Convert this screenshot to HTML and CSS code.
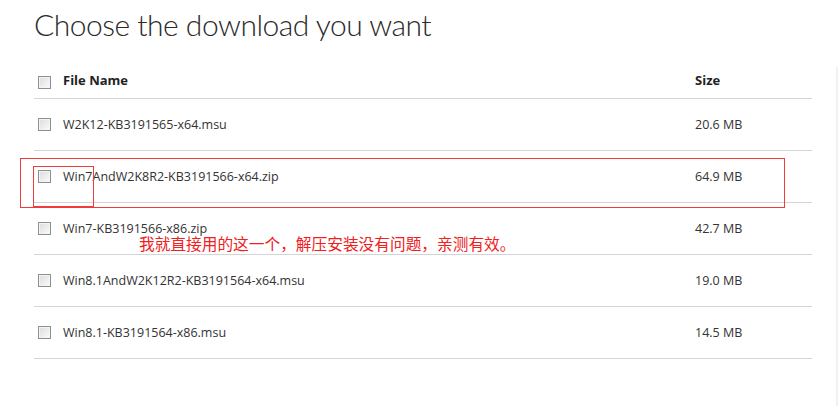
FILE: index.html
```html
<!DOCTYPE html>
<html>
<head>
<meta charset="utf-8">
<title>Choose the download you want</title>
<link rel="stylesheet" href="styles.css">
</head>
<body>
  <div class="wrap">
    <div class="main">
      <h1 class="title">Choose the download you want</h1>

      <div class="files">
        <div class="row head">
          <span class="cell-check"><span class="box"></span></span>
          <span class="cell-name">File Name</span>
          <span class="cell-size">Size</span>
        </div>
        <div class="row">
          <span class="cell-check"><span class="box"></span></span>
          <span class="cell-name">W2K12-KB3191565-x64.msu</span>
          <span class="cell-size">20.6 MB</span>
        </div>
        <div class="row">
          <span class="cell-check"><span class="box"></span></span>
          <span class="cell-name">Win7AndW2K8R2-KB3191566-x64.zip</span>
          <span class="cell-size">64.9 MB</span>
        </div>
        <div class="row">
          <span class="cell-check"><span class="box"></span></span>
          <span class="cell-name">Win7-KB3191566-x86.zip</span>
          <span class="cell-size">42.7 MB</span>
        </div>
        <div class="row">
          <span class="cell-check"><span class="box"></span></span>
          <span class="cell-name">Win8.1AndW2K12R2-KB3191564-x64.msu</span>
          <span class="cell-size">19.0 MB</span>
        </div>
        <div class="row">
          <span class="cell-check"><span class="box"></span></span>
          <span class="cell-name">Win8.1-KB3191564-x86.msu</span>
          <span class="cell-size">14.5 MB</span>
        </div>
      </div>
    </div>
    <div class="rail"></div>
  </div>

  <!-- annotations drawn over the screenshot -->
  <div class="mark mark-row"></div>
  <div class="mark mark-box"></div>
  <div class="note">我就直接用的这一个，解压安装没有问题，亲测有效。</div>
</body>
</html>
```

FILE: styles.css
```css
body, html {
  margin: 0;
  padding: 0;
  background: #fff;
}

body {
  position: relative;
  height: 406px;
  overflow: hidden;
  font-family: "Open Sans", "Noto Sans", sans-serif;
  color: #333;
}

.wrap {
  display: flex;
  height: 406px;
}

.main {
  flex: 1;
  padding-left: 34px;
}

.rail {
  width: 2px;
  margin-top: 67px;
  background: #f1f1f1;
}

.title {
  margin: 0;
  padding-top: 4px;
  height: 58px;
  font-family: Lato, "Open Sans", sans-serif;
  font-size: 30px;
  font-weight: 300;
  letter-spacing: -0.5px;
  line-height: 40px;
  color: #2a2a2a;
}

.files {
  width: 778px;
}

.row {
  display: flex;
  align-items: center;
  height: 51px;
  border-bottom: 1px solid #d4d4d4;
  font-size: 12.5px;
  line-height: 15px;
}

.row.head {
  height: 36px;
  font-weight: 700;
  font-size: 13px;
  color: #222;
}

.row.head .box {
  margin-top: 4px;
}

.cell-check {
  width: 25px;
  padding-left: 4px;
  display: flex;
}

.cell-name {
  flex: 1;
}

.cell-size {
  width: 117px;
}

.box {
  display: block;
  box-sizing: border-box;
  width: 13px;
  height: 13px;
  border: 1px solid #8f8f8f;
  background: linear-gradient(135deg, #dcdcdc, #fbfbfb);
  box-shadow: inset 0 0 0 1px #f4f4f4;
}

.mark {
  position: absolute;
  border: 1px solid #f03c3c;
}

.mark-row {
  left: 20px;
  top: 158px;
  width: 763px;
  height: 48px;
}

.mark-box {
  left: 33px;
  top: 166px;
  width: 59px;
  height: 39px;
}

.note {
  position: absolute;
  left: 139px;
  top: 236px;
  font-family: "Noto Sans CJK SC", sans-serif;
  font-size: 15.7px;
  line-height: 16px;
  color: #f02020;
}
```
